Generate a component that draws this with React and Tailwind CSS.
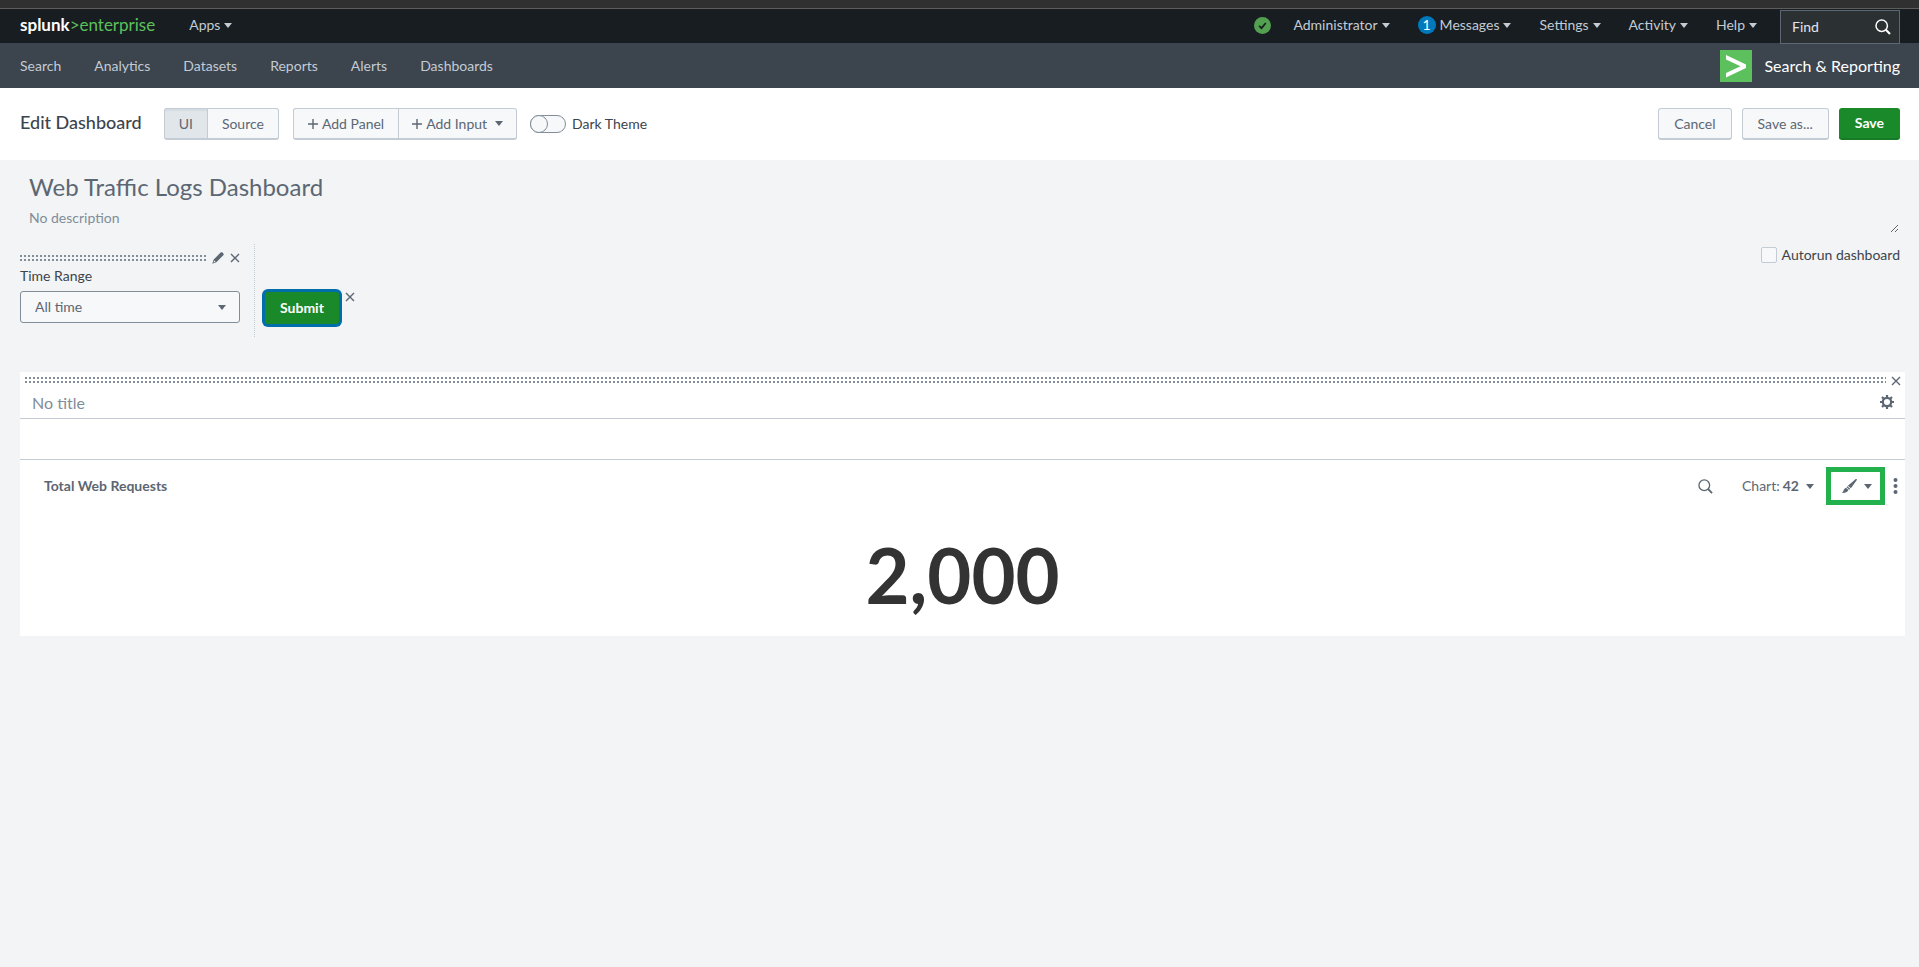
const Caret = ({ className = '' }) => (
  <svg className={`h-[5px] w-2 shrink-0 fill-current ${className}`} viewBox="0 0 8 5" aria-hidden="true">
    <path d="M0 0h8L4 5z" />
  </svg>
)

const Plus = () => (
  <svg className="h-[10px] w-[10px] shrink-0" viewBox="0 0 10 10" fill="none" stroke="currentColor" strokeWidth="1.4" aria-hidden="true">
    <path d="M5 0v10M0 5h10" />
  </svg>
)

const Close = () => (
  <svg className="h-[10px] w-[10px] shrink-0" viewBox="0 0 10 10" fill="none" stroke="currentColor" strokeWidth="1.4" aria-hidden="true">
    <path d="M1 1l8 8M9 1L1 9" />
  </svg>
)

const Magnifier = ({ className = '', strokeWidth = 1.5 }) => (
  <svg className={className} viewBox="0 0 16 16" fill="none" stroke="currentColor" aria-hidden="true">
    <circle cx="6.7" cy="6.7" r="5.7" strokeWidth={strokeWidth} />
    <path d="M10.6 10.6l4.4 4.4" strokeWidth={strokeWidth * 1.4} />
  </svg>
)

const Pencil = () => (
  <svg className="h-3 w-3 shrink-0 fill-current" viewBox="0 0 12 12" aria-hidden="true">
    <path d="M8.6.6c.6-.6 1.300-.6 1.800-.1l1 1c.5.5.5 1.200-.1 1.800L4.300 10.300.3 11.800l1.400-4.200zM2.300 8.400l-.8 2.200 2.100-.8z" fillRule="evenodd" />
  </svg>
)

const Gear = () => (
  <svg className="h-[14px] w-[14px]" viewBox="0 0 14 14" fill="none" stroke="currentColor" aria-hidden="true">
    <circle cx="7" cy="7" r="4.2" strokeWidth="2.3" />
    <path d="M7 0v2.500M7 11.500V14M0 7h2.500M11.500 7H14M2 2l1.800 1.800M10.200 10.200L12 12M12 2l-1.800 1.800M3.800 10.200L2 12" strokeWidth="2.2" />
  </svg>
)

const Brush = () => (
  <svg className="h-[14px] w-[15px] fill-current" viewBox="0 0 15 14" aria-hidden="true">
    <path d="M14.800.2c.2.3 0 .8-.3 1.300L8.900 9.300 5.900 6.700 13.200.4c.6-.5 1.300-.5 1.600-.2zM5.300 7.300l2.900 2.500-.9.900-2.800-2.500zM3.900 8.800l2.700 2.300C5.500 13.300 3 14 0 13.900c1.500-1 1.600-4 3.900-5.100z" />
  </svg>
)

const DragBar = () => (
  <div className="h-[6px] min-w-0 flex-1 cursor-move bg-[conic-gradient(from_270deg_at_2px_2px,#818d99_90deg,transparent_0)] bg-[size:4px_4px]" />
)

const MenuButton = ({ children }) => (
  <button className="flex items-center gap-1">
    {children}
    <Caret />
  </button>
)

const SplunkBar = () => (
  <header className="flex h-[35px] items-center border-t border-[#5d5d5d] bg-[#171d21] pr-[19px] pb-[2px] pl-5 text-[#c3cbd4]">
    <a href="#home" className="text-[17px] leading-5 text-[#5cc05c]">
      <span className="font-bold text-white">splunk</span>&gt;enterprise
    </a>
    <nav className="ml-[34px]">
      <MenuButton>Apps</MenuButton>
    </nav>
    <nav className="ml-auto flex items-center gap-7">
      <button aria-label="Health" className="-mr-[6px]">
        <svg className="h-[17px] w-[17px]" viewBox="0 0 16 16">
          <circle cx="8" cy="8" r="8" fill="#53a051" />
          <path d="M4.800 8.300l2.300 2.200 4-4.800" fill="none" stroke="#171d21" strokeWidth="1.6" />
        </svg>
      </button>
      <MenuButton>Administrator</MenuButton>
      <MenuButton>
        <span className="flex h-[18px] w-[18px] items-center justify-center rounded-full bg-[#007abd] text-white">1</span>
        Messages
      </MenuButton>
      <MenuButton>Settings</MenuButton>
      <MenuButton>Activity</MenuButton>
      <MenuButton>Help</MenuButton>
    </nav>
    <form className="mt-px ml-[23px] flex h-[34px] w-[120px] items-center self-start border border-[#5c6773] bg-[#2b3033] pr-2 pl-[11px]">
      <input aria-label="Find" placeholder="Find" className="min-w-0 flex-1 outline-none placeholder:text-[#e1e6eb]" />
      <Magnifier className="h-4 w-4 text-white" strokeWidth={1.5} />
    </form>
  </header>
)

const links = ['Search', 'Analytics', 'Datasets', 'Reports', 'Alerts', 'Dashboards']

const AppBar = () => (
  <div className="flex h-[45px] items-center bg-[#3c444d] pr-[19px] pl-5">
    <nav className="flex gap-[33px] text-[#c3cbd4]">
      {links.map((link) => (
        <a key={link} href={`#${link}`}>{link}</a>
      ))}
    </nav>
    <a href="#app" className="ml-auto flex items-center gap-3 text-base text-white">
      <svg className="h-8 w-8" viewBox="0 0 32 32" aria-hidden="true">
        <path fill="#5cc05c" d="M0 0h32v32H0z" />
        <path fill="#fff" d="M6 5l20 9.500v3.500L6 27.500v-4.500l14.500-6.700L6 9.500z" />
      </svg>
      Search &amp; Reporting
    </a>
  </div>
)

const button = 'flex h-8 items-center border border-b-2 border-[#c3cbd4] text-[#5c6773]'

const EditBar = () => (
  <div className="flex h-[72px] items-center bg-white pr-[19px] pl-5">
    <h1 className="pb-1 text-lg font-medium text-[#3c444d]">Edit Dashboard</h1>
    <div className="ml-[22px] flex">
      <button className={`${button} rounded-l-[3px] border-r-0 bg-[#e1e6eb] px-[14px] shadow-[inset_0_2px_1px_#d5dce2]`}>UI</button>
      <button className={`${button} rounded-r-[3px] bg-[#f7f8fa] px-[14px]`}>Source</button>
    </div>
    <div className="ml-[14px] flex">
      <button className={`${button} gap-1 rounded-l-[3px] border-r-0 bg-[#f7f8fa] px-[14px]`}><Plus /> Add Panel</button>
      <button className={`${button} gap-1 rounded-r-[3px] bg-[#f7f8fa] px-[13px]`}><Plus /> Add Input <Caret className="ml-1" /></button>
    </div>
    <label className="ml-[13px] flex items-center gap-[6px] text-[#3c444d]">
      <input type="checkbox" role="switch" className="h-[18px] w-9 appearance-none rounded-full border border-[#818d99] bg-[#f7f8fa] before:-mt-px before:-ml-px before:block before:h-[18px] before:w-[18px] before:rounded-full before:border before:border-[#818d99] before:bg-[#f7f8fa]" />
      Dark Theme
    </label>
    <div className="ml-auto flex gap-[10px]">
      <button className={`${button} rounded-[3px] bg-[#f7f8fa] px-[15px]`}>Cancel</button>
      <button className={`${button} rounded-[3px] bg-[#f7f8fa] px-[15px]`}>Save as...</button>
      <button className="h-8 rounded-[3px] border-b-2 border-[#167a26] bg-[#1a8929] px-4 font-bold text-white">Save</button>
    </div>
  </div>
)

const Inputs = () => (
  <div className="flex items-start pr-[19px] pl-5">
    <div className="w-[220px] pt-2">
      <div className="flex items-center text-[#5c6773]">
        <DragBar />
        <button aria-label="Edit input" className="ml-[6px]"><Pencil /></button>
        <button aria-label="Remove input" className="ml-[6px]"><Close /></button>
      </div>
      <label htmlFor="time-range" className="mt-[2px] block leading-5 text-[#3c444d]">Time Range</label>
      <div className="relative mt-[5px] text-[#5c6773]">
        <select id="time-range" className="h-8 w-full appearance-none rounded-[3px] border border-[#818d99] bg-[#f7f8fa] px-[14px]">
          <option>All time</option>
        </select>
        <Caret className="pointer-events-none absolute top-[14px] right-[14px]" />
      </div>
    </div>
    <div className="ml-[14px] flex h-[93px] gap-[6px] border-l border-dotted border-[#c3cbd4] pt-12 pl-[10px]">
      <button className="h-8 rounded-[3px] bg-[#1a8929] px-[15px] font-bold text-white ring-3 ring-[#006eaa]">Submit</button>
      <button aria-label="Remove submit button" className="self-start text-[#5c6773]"><Close /></button>
    </div>
    <label className="ml-auto flex items-center gap-[5px] pt-px text-[#3c444d]">
      <input type="checkbox" className="h-4 w-4 appearance-none rounded-[2px] border border-[#c3cbd4] bg-[#f7f8fa]" />
      Autorun dashboard
    </label>
  </div>
)

const Panel = () => (
  <section className="mr-[14px] ml-5 bg-white text-[#5c6773]">
    <div className="flex h-[47px] flex-col border-b border-[#c3cbd4] pt-1">
      <div className="flex pr-1 pl-[5px]">
        <div className="flex flex-1 pt-px"><DragBar /></div>
        <button aria-label="Remove panel" className="ml-[5px]"><Close /></button>
      </div>
      <div className="flex items-center pr-[11px] pl-3">
        <input aria-label="Panel title" placeholder="No title" className="h-8 flex-1 text-base outline-none placeholder:text-[#818d99]" />
        <button aria-label="Panel settings"><Gear /></button>
      </div>
    </div>
    <div className="h-10" />
    <div className="flex h-[53px] items-center border-t border-[#c3cbd4] pr-[7px] pl-6">
      <h3 className="font-bold">Total Web Requests</h3>
      <button aria-label="Open in search" className="ml-auto"><Magnifier className="h-[15px] w-[15px]" strokeWidth={1.4} /></button>
      <button className="ml-[29px] flex items-center gap-[3px]">
        Chart: <b>42</b>
        <Caret className="ml-1" />
      </button>
      <button aria-label="Format visualization" className="ml-3 flex h-[38px] w-[59px] items-center justify-center gap-[7px] border-[5px] border-[#22b14c] pl-[2px]">
        <Brush />
        <Caret />
      </button>
      <button aria-label="More actions" className="ml-2">
        <svg className="h-4 w-[5px] fill-current" viewBox="0 0 5 16">
          <circle cx="2.5" cy="2" r="2" />
          <circle cx="2.5" cy="8" r="2" />
          <circle cx="2.5" cy="14" r="2" />
        </svg>
      </button>
    </div>
    <div className="flex h-[124px] items-center justify-center pt-[2px] text-[76px] leading-none font-bold text-[#333333]">
      2,000
    </div>
  </section>
)

export default function App() {
  return (
    <div className="min-h-screen bg-[#f2f4f5] font-['Lato','Open_Sans',sans-serif] text-sm">
      <div className="h-2 bg-[#303030]" />
      <SplunkBar />
      <AppBar />
      <EditBar />
      <main>
        <div className="flex flex-col pt-[11px] pr-5 pl-[29px]">
          <input aria-label="Dashboard title" defaultValue="Web Traffic Logs Dashboard" className="h-8 text-2xl text-[#5c6773] outline-none" />
          <textarea aria-label="Description" placeholder="No description" className="h-[30px] resize-y pt-[5px] outline-none placeholder:text-[#818d99]" />
        </div>
        <div className="pt-[11px] pb-[35px]">
          <Inputs />
        </div>
        <Panel />
      </main>
    </div>
  )
}
